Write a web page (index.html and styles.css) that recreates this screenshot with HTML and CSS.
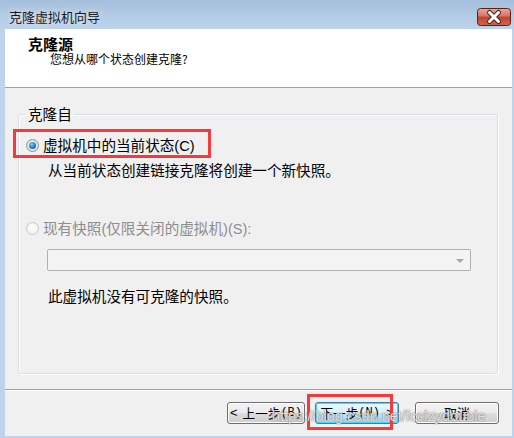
FILE: index.html
```html
<!DOCTYPE html>
<html lang="zh-CN">
<head>
<meta charset="utf-8">
<title>克隆虚拟机向导</title>
<link rel="stylesheet" href="styles.css">
</head>
<body>
<div class="window">
  <div class="titlebar">
    <span class="title">克隆虚拟机向导</span>
    <span class="close">
      <svg width="34" height="18" viewBox="0 0 34 18">
        <defs>
          <linearGradient id="cg" x1="0" y1="0" x2="0" y2="1">
            <stop offset="0" stop-color="#e9a99b"/>
            <stop offset="0.45" stop-color="#d47466"/>
            <stop offset="0.5" stop-color="#c0432f"/>
            <stop offset="1" stop-color="#d0664d"/>
          </linearGradient>
        </defs>
        <rect x="0.5" y="0.5" width="33" height="17" rx="3" fill="url(#cg)" stroke="#5e1f16"/>
        <path d="M12.5 4.5 L21.5 13.5 M21.5 4.5 L12.5 13.5" stroke="#4a2420" stroke-width="5" stroke-linecap="round"/>
        <path d="M12.5 4.5 L21.5 13.5 M21.5 4.5 L12.5 13.5" stroke="#ffffff" stroke-width="3" stroke-linecap="round"/>
      </svg>
    </span>
  </div>
  <div class="client">
    <div class="header">
      <div class="h-title">克隆源</div>
      <div class="h-sub">您想从哪个状态创建克隆?</div>
    </div>
    <div class="body">
      <fieldset class="group">
        <legend>克隆自</legend>
        <div class="opt">
          <span class="radio on"></span>
          <span class="opt-label">虚拟机中的当前状态<span class="latin">(C)</span></span>
          <span class="mark mark-opt"></span>
        </div>
        <div class="desc">从当前状态创建链接克隆将创建一个新快照。</div>
        <div class="opt disabled">
          <span class="radio off"></span>
          <span class="opt-label">现有快照<span class="latin">(</span>仅限关闭的虚拟机<span class="latin">)(S):</span></span>
        </div>
        <div class="combo"><span class="arrow"></span></div>
        <div class="desc desc-last">此虚拟机没有可克隆的快照。</div>
      </fieldset>
    </div>
    <div class="footer">
      <button class="btn prev"><span class="chev">&lt;</span>上一步<span class="mono">(B)</span></button>
      <button class="btn next">下一步<span class="mono">(N)</span><span class="chev chev-r">&gt;</span><span class="mark mark-btn"></span></button>
      <button class="btn cancel">取消</button>
      <span class="watermark">https://blog.csdn.net/fcclzydouble</span>
    </div>
  </div>
</div>
</body>
</html>
```
FILE: styles.css
```css
* { box-sizing: border-box; }
html, body {
  margin: 0;
  padding: 0;
  background: #bcd4ec;
}
body {
  font-family: "Noto Sans CJK SC", "Liberation Sans", sans-serif;
  color: #000;
}
.window {
  width: 514px;
  height: 438px;
  display: flex;
  flex-direction: column;
  background: #bdd4ec;
  padding: 0 2px 2px 5px;
}
.titlebar {
  height: 29px;
  margin: 0 -2px 0 -5px;
  background: linear-gradient(#a5bfdc 0%, #b3cae4 50%, #bcd3eb 100%);
  display: flex;
  align-items: flex-start;
  justify-content: space-between;
  padding: 0 3px 0 9px;
}
.title {
  font-size: 13px;
  line-height: 16px;
  margin-top: 9px;
  color: #1a1a1a;
  text-shadow: 0 0 6px rgba(255,255,255,0.8);
}
.close {
  margin-top: 8px;
  display: flex;
}
.client {
  flex: 1;
  background: #f0f0f0;
  display: flex;
  flex-direction: column;
}
.header {
  height: 59px;
  background: #fff;
  border-bottom: 1px solid #a0a0a0;
  padding: 7px 0 0 23px;
}
.h-title {
  font-size: 15px;
  font-weight: bold;
  line-height: 16px;
}
.h-sub {
  font-size: 12px;
  line-height: 16px;
  margin-top: -1px;
  padding-left: 22px;
}
.body {
  padding: 16px 14px 0 13px;
}
.group {
  margin: 0;
  min-width: 0;
  border: 1px solid #d5dfe5;
  border-radius: 3px;
  box-shadow: 1px 1px 0 #fff, inset 1px 1px 0 #fff;
  padding: 11px 7px 67px 7px;
  font-size: 14.6px;
  line-height: 20px;
}
.group legend {
  padding: 0 2px;
  font-size: 14.6px;
  line-height: 20px;
}
.opt {
  position: relative;
  display: flex;
  align-items: center;
  height: 20px;
}
.radio {
  width: 13px;
  height: 13px;
  border-radius: 50%;
  margin-right: 4px;
  flex: none;
}
.radio.on {
  border: 1px solid #8e8f8f;
  background: radial-gradient(circle at 50% 50%, #f4f4f4 0, #dcdcdc 100%);
  display: flex;
  align-items: center;
  justify-content: center;
}
.radio.on::after {
  content: "";
  width: 7px;
  height: 7px;
  border-radius: 50%;
  background: radial-gradient(circle at 40% 35%, #8ed2f8 0, #2a8ad4 45%, #0a3f7a 100%);
}
.radio.off {
  border: 1px solid #c8c8c8;
  background: radial-gradient(circle at 50% 40%, #ffffff 0, #ececec 100%);
}
.latin {
  font-family: "Liberation Sans", sans-serif;
}
.opt.disabled {
  color: #8d8d8d;
  margin-top: 38px;
}
.mark {
  position: absolute;
  border: 3px solid #f23b3b;
  pointer-events: none;
}
.mark-opt {
  left: -13px;
  top: -6px;
  width: 198px;
  height: 29px;
}
.desc {
  margin-top: 5px;
  padding-left: 22px;
}
.combo {
  position: relative;
  margin: 11px 0 0 21px;
  width: 424px;
  height: 22px;
  border: 1px solid #adb2b5;
  border-radius: 2px;
  background: #f4f4f4;
}
.arrow {
  position: absolute;
  right: 6px;
  top: 9px;
  width: 0;
  height: 0;
  border-left: 4px solid transparent;
  border-right: 4px solid transparent;
  border-top: 4px solid #a6a6a6;
}
.desc-last {
  margin-top: 15px;
}
.footer {
  position: relative;
  margin-top: 15px;
  flex: 1;
  border-top: 1px solid #a0a0a0;
  box-shadow: inset 0 1px 0 #fff;
  display: flex;
  justify-content: flex-end;
  align-items: flex-start;
  padding: 12px 13px 0 0;
}
.btn {
  position: relative;
  height: 22px;
  display: flex;
  align-items: center;
  justify-content: center;
  font-family: "Noto Sans CJK SC", "Liberation Sans", sans-serif;
  font-size: 12.6px;
  line-height: 18px;
  color: #000;
  border: 1px solid #707070;
  border-radius: 3px;
  background: linear-gradient(#f2f2f2 0%, #ebebeb 50%, #dddddd 51%, #cfcfcf 100%);
  box-shadow: inset 0 0 0 1px #fcfcfc;
  padding: 0;
}
.mono {
  font-family: "Liberation Mono", monospace;
  font-size: 12px;
}
.chev {
  font-family: "Liberation Sans", sans-serif;
  font-size: 13px;
  margin-right: 5px;
}
.chev-r {
  margin: 0 0 0 6px;
}
.prev {
  width: 78px;
  margin-right: 10px;
}
.next {
  width: 84px;
  margin-right: 16px;
  border-color: #3c7fb1;
  background: linear-gradient(#eaf6fd 0%, #d9f0fc 50%, #bee6fd 51%, #a7d9f5 100%);
  box-shadow: inset 0 0 0 1px #48d8fb;
}
.cancel {
  width: 84px;
  font-size: 13px;
}
.mark-btn {
  left: -9px;
  top: -9px;
  width: 86px;
  height: 36px;
}
.watermark {
  position: absolute;
  left: 267px;
  top: 17px;
  font-family: "Liberation Sans", sans-serif;
  font-size: 14.5px;
  line-height: 18px;
  color: rgba(255, 255, 255, 0.8);
  text-shadow: 0 0 1px rgba(90, 90, 90, 0.9), 0 0 2px rgba(120, 120, 120, 0.6);
  white-space: nowrap;
  pointer-events: none;
}
```
